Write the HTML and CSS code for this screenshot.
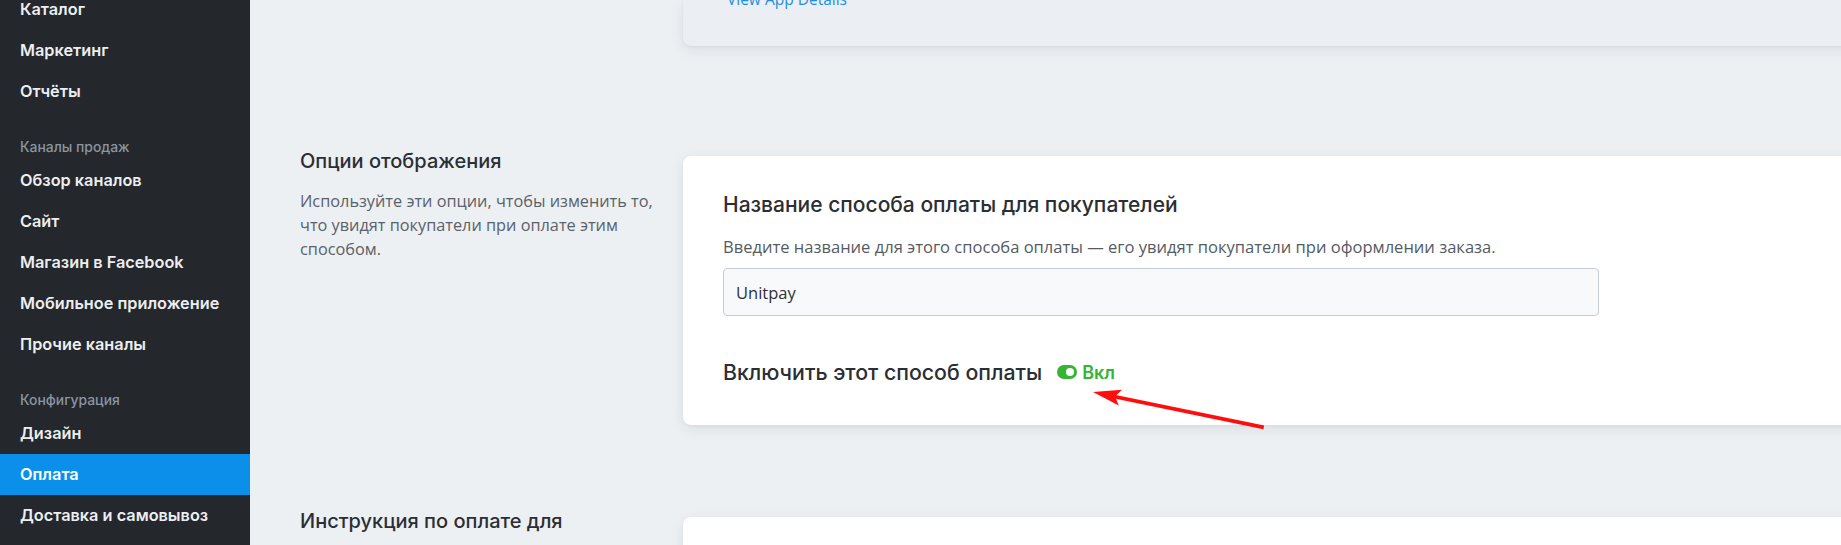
FILE: index.html
```html
<!DOCTYPE html>
<html lang="ru">
<head>
<meta charset="utf-8">
<title>Оплата — Unitpay</title>
<link rel="stylesheet" href="styles.css">
</head>
<body>
<div class="app">
  <aside class="sidebar">
    <nav class="nav">
      <a class="nav-item" href="#">Каталог</a>
      <a class="nav-item" href="#">Маркетинг</a>
      <a class="nav-item" href="#">Отчёты</a>
      <div class="nav-label">Каналы продаж</div>
      <a class="nav-item" href="#">Обзор каналов</a>
      <a class="nav-item" href="#">Сайт</a>
      <a class="nav-item" href="#">Магазин в Facebook</a>
      <a class="nav-item" href="#">Мобильное приложение</a>
      <a class="nav-item" href="#">Прочие каналы</a>
      <div class="nav-label">Конфигурация</div>
      <a class="nav-item" href="#">Дизайн</a>
      <a class="nav-item active" href="#">Оплата</a>
      <a class="nav-item" href="#">Доставка и самовывоз</a>
    </nav>
  </aside>

  <main class="main">
    <div class="section section-top">
      <div class="intro"></div>
      <div class="card card-muted">
        <a class="link" href="#">View App Details</a>
      </div>
    </div>

    <section class="section section-display">
      <div class="intro">
        <h2 class="intro-title">Опции отображения</h2>
        <p class="intro-text">Используйте эти опции, чтобы изменить то, что увидят покупатели при оплате этим способом.</p>
      </div>
      <div class="card card-form">
        <h3 class="field-title">Название способа оплаты для покупателей</h3>
        <p class="field-hint">Введите название для этого способа оплаты — его увидят покупатели при оформлении заказа.</p>
        <input class="text-input" type="text" value="Unitpay">
        <div class="toggle-row">
          <span class="toggle-label">Включить этот способ оплаты</span>
          <span class="toggle"><span class="toggle-knob"></span></span>
          <span class="toggle-state">Вкл</span>
        </div>
      </div>
    </section>

    <section class="section section-instructions">
      <div class="intro">
        <h2 class="intro-title intro-title-tall">Инструкция по оплате для покупателей</h2>
      </div>
      <div class="card card-next"></div>
    </section>
  </main>

  <svg class="annotation" width="190" height="52" viewBox="0 0 190 52">
    <line x1="33" y1="16.3" x2="182" y2="47" stroke="#ff0d0d" stroke-width="3.6" stroke-linecap="square"/>
    <polygon points="13,12 42,9.8 35,16.4 38.8,25.6" fill="#ff0d0d"/>
  </svg>
</div>
</body>
</html>
```

FILE: styles.css
```css
* { box-sizing: border-box; }

html, body {
  margin: 0;
  padding: 0;
  height: 100%;
  overflow: hidden;
}

body {
  background: #ecf0f3;
  font-family: "Open Sans", "Noto Sans", sans-serif;
  color: #2b2e33;
}

.app {
  position: relative;
  display: flex;
  height: 545px;
  overflow: hidden;
}

/* Sidebar */
.sidebar {
  flex: none;
  width: 250px;
  background: #24272c;
  overflow: hidden;
}

.nav {
  display: flex;
  flex-direction: column;
  margin-top: -11px;
}

.nav-item {
  display: block;
  height: 41px;
  line-height: 41px;
  padding: 0 20px;
  font-family: Inter, "Noto Sans", sans-serif;
  font-weight: 600;
  font-size: 16.3px;
  color: #eceef1;
  text-decoration: none;
  white-space: nowrap;
}

.nav-item.active {
  background: #0a8fea;
  color: #ffffff;
}

.nav-label {
  padding: 22px 20px 0;
  height: 48px;
  line-height: 26px;
  font-family: Inter, "Noto Sans", sans-serif;
  font-size: 13.9px;
  font-weight: 500;
  color: #8b95a1;
}

/* Main */
.main {
  flex: 1;
  min-width: 0;
  padding-left: 50px;
  overflow: hidden;
}

.section {
  display: flex;
  gap: 23px;
}

.intro {
  flex: none;
  width: 360px;
}

.card {
  flex: none;
  width: 1220px;
  background: #ffffff;
  border-radius: 8px;
  box-shadow: 0 4px 14px rgba(30, 40, 55, 0.08), 0 1px 3px rgba(30, 40, 55, 0.05);
}

/* Top (scrolled) card */
.section-top {
  height: 46px;
}

.card-muted {
  height: 46px;
  border-radius: 0 0 8px 8px;
  background: #ebeef2;
  display: flex;
  align-items: flex-end;
  padding: 0 0 37px 44px;
  overflow: hidden;
}

.link {
  font-size: 15.5px;
  line-height: 20px;
  color: #1e8fe3;
  text-decoration: none;
  white-space: nowrap;
}

/* Display options section */
.section-display {
  margin-top: 100px;
}

.intro-title {
  margin: 0;
  font-family: Inter, "Noto Sans", sans-serif;
  font-weight: 500;
  font-size: 20px;
  line-height: 30px;
  color: #2b2e33;
}

.intro-title-tall {
  line-height: 36px;
}

.intro-text {
  margin: 13px 0 0;
  font-size: 16.3px;
  line-height: 24px;
  color: #5b6169;
}

.card-form {
  margin-top: 10px;
  padding: 36px 40px 40px;
}

.field-title {
  margin: 0;
  font-family: Inter, "Noto Sans", sans-serif;
  font-weight: 500;
  font-size: 21px;
  line-height: 26px;
  color: #2b2e33;
}

.field-hint {
  margin: 17px 0 0;
  font-size: 16.55px;
  line-height: 24px;
  color: #555b63;
}

.text-input {
  display: block;
  margin-top: 9px;
  width: 876px;
  height: 48px;
  padding: 0 12px;
  border: 1px solid #c7cdd4;
  border-radius: 4px;
  background: #f8f9fa;
  font-family: "Open Sans", "Noto Sans", sans-serif;
  font-size: 16.5px;
  color: #2f3237;
}

.toggle-row {
  display: flex;
  align-items: center;
  margin-top: 43px;
  height: 26px;
}

.toggle-label {
  font-family: Inter, "Noto Sans", sans-serif;
  font-weight: 500;
  font-size: 21.3px;
  color: #2b2e33;
}

.toggle {
  position: relative;
  margin-left: 15px;
  width: 20px;
  height: 14px;
  border-radius: 7px;
  background: #35b534;
}

.toggle-knob {
  position: absolute;
  top: 3px;
  right: 3px;
  width: 8px;
  height: 8px;
  border-radius: 50%;
  background: #ffffff;
}

.toggle-state {
  margin-left: 5px;
  font-family: Inter, "Noto Sans", sans-serif;
  font-weight: 600;
  font-size: 18px;
  color: #35b534;
}

/* Instructions section */
.section-instructions {
  margin-top: 78px;
}

.card-next {
  margin-top: 14px;
  height: 200px;
}

/* Red annotation arrow drawn over the screenshot */
.annotation {
  position: absolute;
  left: 1080px;
  top: 380px;
  pointer-events: none;
}
```
